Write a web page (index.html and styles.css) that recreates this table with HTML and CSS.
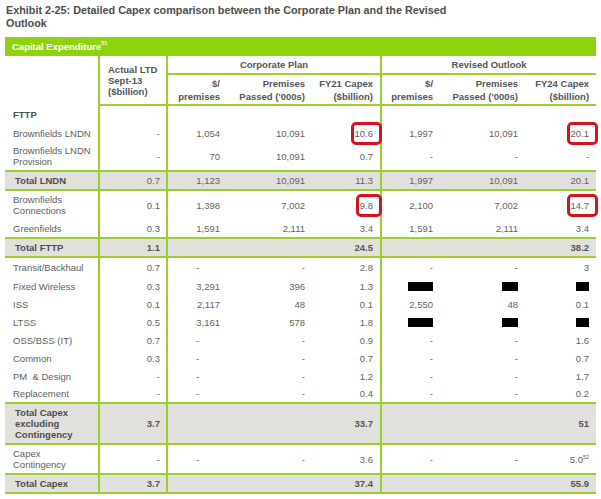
FILE: index.html
```html
<!DOCTYPE html>
<html>
<head>
<meta charset="utf-8">
<title>Exhibit 2-25</title>
<link rel="stylesheet" href="styles.css">
</head>
<body>
<div class="page">
  <h1 class="title">Exhibit 2-25: Detailed Capex comparison between the Corporate Plan and the Revised Outlook</h1>
  <div class="bar">Capital Expenditure<sup>51</sup></div>
  <table class="capex">
    <colgroup>
      <col class="c-label"><col class="c-act"><col class="c-ps"><col class="c-pp"><col class="c-fy"><col class="c-ps2"><col class="c-pp2"><col class="c-fy2">
    </colgroup>
    <thead>
      <tr class="h1">
        <th class="lab" rowspan="2"></th>
        <th class="act" rowspan="2">Actual LTD<br>Sept-13<br>($billion)</th>
        <th class="grp" colspan="3">Corporate Plan</th>
        <th class="grp" colspan="3">Revised Outlook</th>
      </tr>
      <tr class="h2">
        <th>$/<br>premises</th>
        <th>Premises<br>Passed ('000s)</th>
        <th>FY21 Capex<br>($billion)</th>
        <th>$/<br>premises</th>
        <th>Premises<br>Passed ('000s)</th>
        <th>FY24 Capex<br>($billion)</th>
      </tr>
    </thead>
    <tbody>
      <tr class="r-first"><td class="lab sec">FTTP</td><td></td><td></td><td></td><td></td><td></td><td></td><td></td></tr>
      <tr class="r"><td class="lab">Brownfields LNDN</td><td>-</td><td>1,054</td><td>10,091</td><td><span class="hl">10.6</span></td><td>1,997</td><td>10,091</td><td><span class="hl">20.1</span></td></tr>
      <tr class="r2"><td class="lab">Brownfields LNDN<br>Provision</td><td>-</td><td>70</td><td>10,091</td><td>0.7</td><td>-</td><td>-</td><td>-</td></tr>
      <tr class="tot"><td class="lab">Total LNDN</td><td>0.7</td><td>1,123</td><td>10,091</td><td>11.3</td><td>1,997</td><td>10,091</td><td>20.1</td></tr>
      <tr class="r2"><td class="lab">Brownfields<br>Connections</td><td>0.1</td><td>1,398</td><td>7,002</td><td><span class="hl">9.8</span></td><td>2,100</td><td>7,002</td><td><span class="hl">14.7</span></td></tr>
      <tr class="r-green"><td class="lab">Greenfields</td><td>0.3</td><td>1,591</td><td>2,111</td><td>3.4</td><td>1,591</td><td>2,111</td><td>3.4</td></tr>
      <tr class="tot strong"><td class="lab">Total FTTP</td><td>1.1</td><td></td><td></td><td>24.5</td><td></td><td></td><td>38.2</td></tr>
      <tr class="r-after"><td class="lab">Transit/Backhaul</td><td>0.7</td><td class="mid">-</td><td>-</td><td>2.8</td><td>-</td><td>-</td><td>3</td></tr>
      <tr class="r"><td class="lab">Fixed Wireless</td><td>0.3</td><td>3,291</td><td>396</td><td>1.3</td><td><span class="rd rd-w"></span></td><td><span class="rd rd-m"></span></td><td><span class="rd rd-s"></span></td></tr>
      <tr class="r"><td class="lab">ISS</td><td>0.1</td><td>2,117</td><td>48</td><td>0.1</td><td>2,550</td><td>48</td><td>0.1</td></tr>
      <tr class="r"><td class="lab">LTSS</td><td>0.5</td><td>3,161</td><td>578</td><td>1.8</td><td><span class="rd rd-w"></span></td><td><span class="rd rd-m"></span></td><td><span class="rd rd-s"></span></td></tr>
      <tr class="r"><td class="lab">OSS/BSS (IT)</td><td>0.7</td><td class="mid">-</td><td>-</td><td>0.9</td><td>-</td><td>-</td><td>1.6</td></tr>
      <tr class="r"><td class="lab">Common</td><td>0.3</td><td class="mid">-</td><td>-</td><td>0.7</td><td>-</td><td>-</td><td>0.7</td></tr>
      <tr class="r"><td class="lab">PM &nbsp;&amp; Design</td><td>-</td><td class="mid">-</td><td>-</td><td>1.2</td><td>-</td><td>-</td><td>1.7</td></tr>
      <tr class="r"><td class="lab">Replacement</td><td>-</td><td class="mid">-</td><td>-</td><td>0.4</td><td>-</td><td>-</td><td>0.2</td></tr>
      <tr class="tot strong r3"><td class="lab">Total Capex<br>excluding<br>Contingency</td><td>3.7</td><td></td><td></td><td>33.7</td><td></td><td></td><td>51</td></tr>
      <tr class="r-cont"><td class="lab">Capex<br>Contingency</td><td>-</td><td class="mid">-</td><td>-</td><td>3.6</td><td>-</td><td>-</td><td class="fn">5.0<sup>52</sup></td></tr>
      <tr class="tot strong"><td class="lab">Total Capex</td><td>3.7</td><td></td><td></td><td>37.4</td><td></td><td></td><td>55.9</td></tr>
    </tbody>
  </table>
</div>
</body>
</html>
```

FILE: styles.css
```css
html, body {
  margin: 0;
  padding: 0;
  background: #ffffff;
}

body {
  font-family: "Liberation Sans", Arial, sans-serif;
  color: #636363;
}

.page {
  padding: 4px 5px 0 5px;
}

.title {
  margin: 0 0 0 1px;
  max-width: 460px;
  font-size: 10.8px;
  line-height: 13px;
  font-weight: bold;
  color: #4d4d4d;
}

.bar {
  margin-top: 7px;
  height: 19px;
  background: #8fd20e;
  color: #ffffff;
  font-weight: bold;
  font-size: 9.5px;
  line-height: 19px;
  padding-left: 7px;
}

.bar sup {
  font-size: 5.5px;
  line-height: 0;
  vertical-align: 5px;
}

.capex {
  border-collapse: collapse;
  table-layout: fixed;
  width: 591px;
  font-size: 9.5px;
}

.c-label { width: 94px; }
.c-act { width: 68px; border-left: 2px solid #9ccf2c; }
.c-ps { width: 60px; border-left: 2px solid #9ccf2c; }
.c-pp { width: 85px; }
.c-fy { width: 69px; }
.c-ps2 { width: 59px; border-left: 2px solid #9ccf2c; }
.c-pp2 { width: 85px; }
.c-fy2 { width: 71px; }

.capex th,
.capex td {
  padding: 0 7px 0 0;
  text-align: right;
  vertical-align: middle;
  line-height: 11px;
  white-space: nowrap;
}

.capex td:nth-child(2) {
  padding-right: 6px;
}

.capex th {
  font-weight: bold;
  color: #555555;
}

.capex .h1 { height: 18px; }
.capex .h2 { height: 31px; }

.capex .h2 th {
  line-height: 13px;
  border-bottom: 2px solid #9ccf2c;
}

.capex th.act {
  text-align: left;
  padding-left: 8px;
  border-bottom: 2px solid #9ccf2c;
}

.capex th.grp {
  text-align: center;
  padding: 0;
  border-bottom: 2px solid #9ccf2c;
}

.capex td.lab {
  text-align: left;
  padding-left: 8px;
  color: #5e5e5e;
}

.capex td.sec {
  font-weight: bold;
  color: #4d4d4d;
}

.capex td.mid {
  text-align: center;
  padding-right: 0;
}

.r-first { height: 19px; }
.r { height: 18px; }
.r2 { height: 29px; }
.r-green { height: 19px; }
.r-after { height: 20px; }
.r-cont { height: 30px; }

.tot { height: 19px; }
.tot.r3 { height: 41px; }

.tot td {
  background: #e1e0dc;
  border-top: 2px solid #9ccf2c;
  border-bottom: 2px solid #9ccf2c;
}

.tot td.lab {
  font-weight: bold;
  padding-left: 10px;
  color: #4d4d4d;
}

.strong td {
  font-weight: bold;
  color: #555555;
}

.hl {
  position: relative;
}

.hl::after {
  content: "";
  position: absolute;
  left: -4px;
  right: -9px;
  top: -6px;
  bottom: -6px;
  border: 3px solid #d3141f;
  border-radius: 5px;
}

.rd {
  display: inline-block;
  height: 9px;
  background: #000000;
  vertical-align: middle;
}

.rd-w { width: 25px; }
.rd-m { width: 16px; }
.rd-s { width: 13px; }

.fn {
  padding-right: 5px;
}

.fn sup {
  font-size: 5.5px;
  line-height: 0;
  vertical-align: 4px;
}
```
